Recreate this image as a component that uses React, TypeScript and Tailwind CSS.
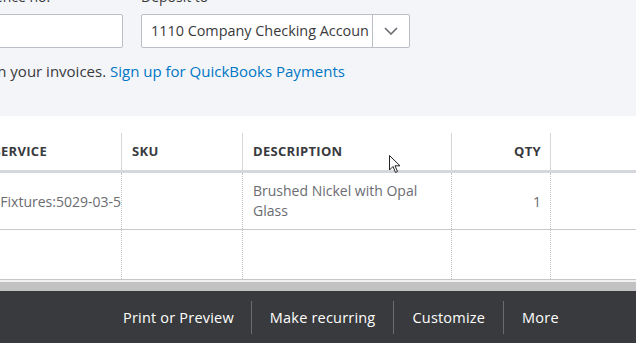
import React from "react";

const font = { fontFamily: "'Open Sans', Lato, sans-serif" };

export default function App() {
  return (
    <div className="relative w-[636px] h-[343px] overflow-hidden bg-white" style={font}>
      {/* top form area */}
      <div className="h-[116px] bg-[#f4f5f8] relative overflow-hidden">
        <div className="flex items-start gap-[18px] -ml-[40px] pt-0">
          <div className="flex flex-col w-[163px]">
            <div className="-mt-[13px] h-[27px] text-[14px] text-[#393a3d] leading-[20px]">Reference no.</div>
            <div className="h-[34px] bg-white border border-[#babec5] rounded-[2px]" />
          </div>
          <div className="flex flex-col w-[269px]">
            <div className="-mt-[13px] h-[27px] text-[14px] text-[#393a3d] leading-[20px]">Deposit to</div>
            <div className="h-[34px] bg-white border border-[#babec5] rounded-[2px] flex">
              <div className="flex-1 pl-[9px] text-[14.4px] text-[#393a3d] leading-[32px] whitespace-nowrap overflow-hidden">
                1110 Company Checking Accoun
              </div>
              <div className="w-[37px] border-l border-[#babec5] flex items-center justify-center">
                <svg width="14" height="8" viewBox="0 0 14 8">
                  <path d="M1 1 L7 7 L13 1" fill="none" stroke="#6b6c72" strokeWidth="1.6" />
                </svg>
              </div>
            </div>
          </div>
        </div>
        <div className="mt-[13px] flex whitespace-nowrap text-[15px] text-[#393a3d] leading-[20px]">
          <div className="w-[110px] shrink-0 flex justify-end">
            <span className="shrink-0">Let customers pay online. Turn on payments in your invoices.&nbsp;</span>
          </div>
          <span className="shrink-0 text-[#0077c5]">Sign up for QuickBooks Payments</span>
        </div>
      </div>

      {/* table */}
      <div className="h-[163px] bg-white pt-[17px] flex flex-col">
        <div className="flex h-[37px] -ml-[12px] text-[13px] tracking-[0.3px] font-bold text-[#393a3d]">
          <div className="w-[134px] border-r border-[#d4d7dc] flex items-center">
            <div className="w-[59px] flex justify-end whitespace-nowrap">
              <span className="shrink-0">PRODUCT/SERVICE</span>
            </div>
          </div>
          <div className="w-[121px] border-r border-[#d4d7dc] flex items-center pl-[10px]">SKU</div>
          <div className="w-[209px] border-r border-[#d4d7dc] flex items-center pl-[10px]">DESCRIPTION</div>
          <div className="w-[99px] border-r border-[#d4d7dc] flex items-center justify-end pr-[9px]">QTY</div>
          <div className="flex-1" />
        </div>
        <div className="h-[3px] bg-[#d4d7dc]" />
        <div className="flex h-[57px] border-b border-[#c8c9cc] -ml-[12px] text-[14px] text-[#6b6c72]">
          <div className="w-[134px] border-r border-dotted border-[#c0c2c6] flex items-center whitespace-nowrap overflow-hidden justify-end">
            <span className="shrink-0">Fixtures:5029-03-5</span>
          </div>
          <div className="w-[121px] border-r border-dotted border-[#c0c2c6]" />
          <div className="w-[209px] border-r border-dotted border-[#c0c2c6] flex items-center pl-[10px] leading-[20px]">
            Brushed Nickel with Opal<br />Glass
          </div>
          <div className="w-[99px] border-r border-dotted border-[#c0c2c6] flex items-center justify-end pr-[9px]">1</div>
          <div className="flex-1" />
        </div>
        <div className="flex flex-1 -ml-[12px]">
          <div className="w-[134px] border-r border-dotted border-[#c0c2c6]" />
          <div className="w-[121px] border-r border-dotted border-[#c0c2c6]" />
          <div className="w-[209px] border-r border-dotted border-[#c0c2c6]" />
          <div className="w-[99px] border-r border-dotted border-[#c0c2c6]" />
          <div className="flex-1" />
        </div>
      </div>
      <div className="h-px bg-[#c6c6c6]" />
      <div className="h-[2px] bg-[#f0f0f0]" />
      <div className="h-[9px] bg-[#c2c2c2]" />

      {/* footer */}
      <div className="h-[52px] bg-[#393a3d] flex items-center pl-[123px] pt-px text-[14.5px] tracking-[0.2px] text-white">
        <div className="pr-[17px]">Print or Preview</div>
        <div className="w-px h-[33px] bg-[#6b6c72]" />
        <div className="px-[18px]">Make recurring</div>
        <div className="w-px h-[33px] bg-[#6b6c72]" />
        <div className="px-[18px]">Customize</div>
        <div className="w-px h-[33px] bg-[#6b6c72]" />
        <div className="px-[18px]">More</div>
      </div>

      {/* cursor */}
      <svg className="absolute left-[389px] top-[155px]" width="13" height="19" viewBox="0 0 13 19">
        <path d="M0.5 0.5 L0.5 15 L4 11.5 L6.5 17.5 L8.5 16.5 L6 10.8 L11 10.8 Z" fill="white" stroke="#222" strokeWidth="1" strokeLinejoin="round" />
      </svg>
    </div>
  );
}
